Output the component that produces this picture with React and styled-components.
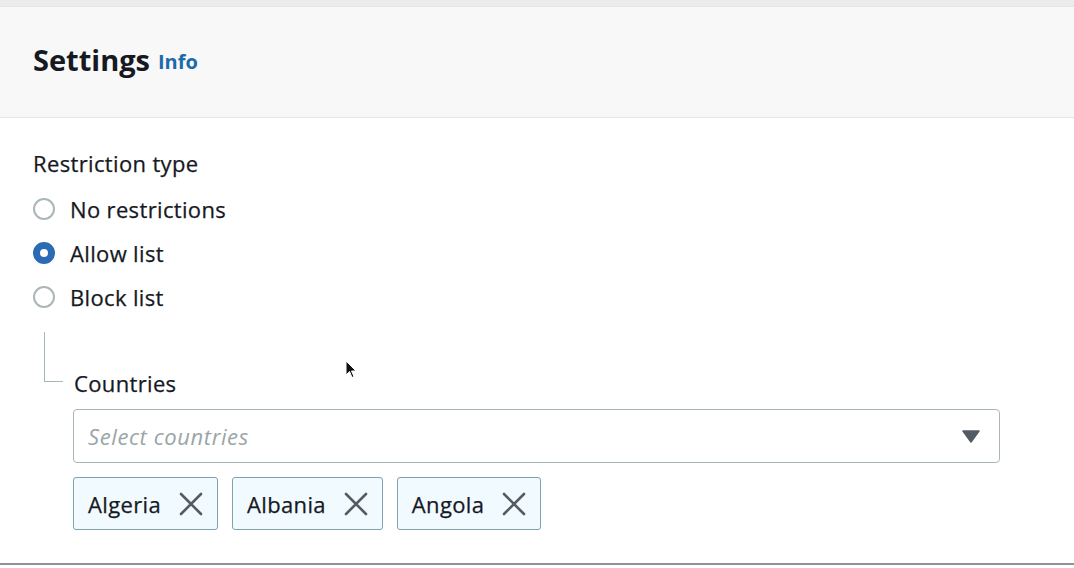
import React from "react";
import styled, { createGlobalStyle } from "styled-components";

const Global = createGlobalStyle`
  html, body { margin: 0; padding: 0; background: #ffffff; }
  body { font-family: "Open Sans", "Liberation Sans", Arial, sans-serif; color: #16191f; }
  * { box-sizing: border-box; }
`;

const Page = styled.div`
  width: 1074px;
  height: 568px;
  overflow: hidden;
  background: #ffffff;
  display: flex;
  flex-direction: column;
`;

const TopStrip = styled.div`
  height: 7px;
  background: #ececec;
  border-bottom: 1px solid #e6e6e6;
`;

const Header = styled.div`
  height: 111px;
  background: #f8f8f8;
  border-bottom: 1px solid #e4e6e6;
  display: flex;
  align-items: center;
  padding: 0 33px 6px;
  gap: 8px;
`;

const Title = styled.h2`
  margin: 0;
  font-size: 29px;
  font-weight: 700;
  color: #16191f;
  letter-spacing: 0;
`;

const InfoLink = styled.a`
  font-size: 20px;
  font-weight: 700;
  color: #1d6aa8;
  text-decoration: none;
  margin-top: 5px;
`;

const Body = styled.div`
  flex: 1;
  padding: 31px 33px 0;
  border-bottom: 2px solid #8d9396;
  margin-bottom: 3px;
  display: flex;
  flex-direction: column;
`;

const textStyle = `
  font-size: 22px;
  font-weight: 400;
  letter-spacing: 0.35px;
  color: #16191f;
  -webkit-text-stroke: 0.25px #16191f;
`;

const Label = styled.div`
  ${textStyle}
  line-height: 28px;
`;

const RadioGroup = styled.div`
  display: flex;
  flex-direction: column;
  margin-top: 10px;
`;

const RadioRow = styled.label`
  display: flex;
  align-items: center;
  gap: 15px;
  height: 44px;
  ${textStyle}
`;

const RadioCircle = styled.span`
  width: 22px;
  height: 22px;
  border-radius: 50%;
  flex: none;
  border: ${(p) => (p.$checked ? "7px solid #2a6bb4" : "2px solid #aab7b8")};
  background: #ffffff;
`;

const Nested = styled.div`
  display: flex;
  margin-top: 13px;
`;

const Connector = styled.div`
  height: 50px;
  margin-left: 11px;
  border-left: 1px solid #aab7b8;
  border-bottom: 1px solid #aab7b8;
  width: 19px;
  flex: none;
`;

const Field = styled.div`
  display: flex;
  flex-direction: column;
  margin-left: 10px;
  margin-top: 37px;
  flex: 1;
  max-width: 927px;
`;

const FieldLabel = styled.div`
  ${textStyle}
  line-height: 28px;
  margin-left: 1px;
`;

const Select = styled.div`
  margin-top: 12px;
  height: 54px;
  border: 1px solid #aab7b8;
  border-radius: 4px;
  display: flex;
  align-items: center;
  justify-content: space-between;
  padding: 0 19px 0 14px;
`;

const Placeholder = styled.span`
  ${textStyle}
  font-style: italic;
  color: #9aa5a7;
  -webkit-text-stroke: 0;
  letter-spacing: 0.6px;
`;

const Tokens = styled.div`
  display: flex;
  gap: 14px;
  margin-top: 14px;
`;

const Token = styled.div`
  height: 53px;
  display: flex;
  align-items: center;
  gap: 18px;
  padding: 0 14px 0 14px;
  background: #f1faff;
  border: 1px solid #7fa2b0;
  border-radius: 3px;
  ${textStyle}
`;

const Cursor = styled.svg`
  position: absolute;
  left: 345px;
  top: 360px;
`;

const Caret = () => (
  <svg width="18" height="13" viewBox="0 0 18 13">
    <path d="M1 1 L17 1 L9 12 Z" fill="#545b64" stroke="#545b64" strokeWidth="1.5" strokeLinejoin="round" />
  </svg>
);

const Close = () => (
  <svg width="24" height="24" viewBox="0 0 24 24">
    <path d="M2 2 L22 22 M22 2 L2 22" stroke="#545b64" strokeWidth="2.6" strokeLinecap="round" />
  </svg>
);

export default function App() {
  const options = [
    { label: "No restrictions", checked: false },
    { label: "Allow list", checked: true },
    { label: "Block list", checked: false },
  ];
  const countries = ["Algeria", "Albania", "Angola"];
  return (
    <>
      <Global />
      <Page>
        <TopStrip />
        <Header>
          <Title>Settings</Title>
          <InfoLink href="#">Info</InfoLink>
        </Header>
        <Body>
          <Label>Restriction type</Label>
          <RadioGroup>
            {options.map((o) => (
              <RadioRow key={o.label}>
                <RadioCircle $checked={o.checked} />
                {o.label}
              </RadioRow>
            ))}
          </RadioGroup>
          <Nested>
            <Connector />
            <Field>
              <FieldLabel>Countries</FieldLabel>
              <Select>
                <Placeholder>Select countries</Placeholder>
                <Caret />
              </Select>
              <Tokens>
                {countries.map((c) => (
                  <Token key={c}>
                    {c}
                    <Close />
                  </Token>
                ))}
              </Tokens>
            </Field>
          </Nested>
        </Body>
        <Cursor width="14" height="20" viewBox="0 0 14 20">
          <path d="M1 1 L1 15 L4.5 11.5 L7 17.5 L9 16.5 L6.5 11 L11 11 Z" fill="#111" stroke="#fff" strokeWidth="1" />
        </Cursor>
      </Page>
    </>
  );
}
